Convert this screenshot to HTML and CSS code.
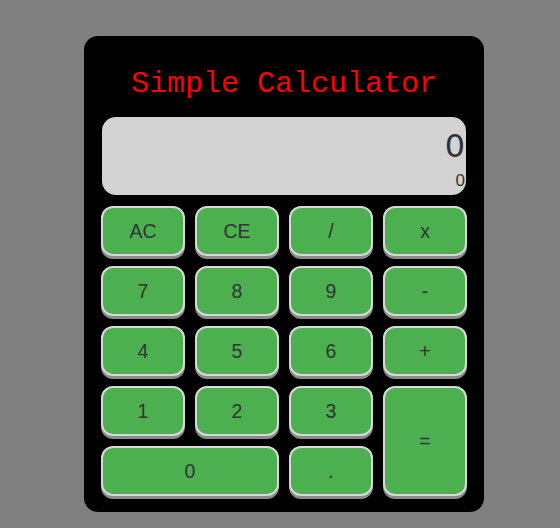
FILE: index.html
```html
<!DOCTYPE html>
<html>
<head>
<meta charset="utf-8">
<link rel="stylesheet" href="styles.css">
</head>
<body>
<div class="calc">
  <h1 class="title">Simple Calculator</h1>
  <div class="display">
    <div class="current">0</div>
    <div class="previous">0</div>
  </div>
  <div class="keys">
    <button class="key">AC</button>
    <button class="key">CE</button>
    <button class="key">/</button>
    <button class="key">x</button>
    <button class="key">7</button>
    <button class="key">8</button>
    <button class="key">9</button>
    <button class="key">-</button>
    <button class="key">4</button>
    <button class="key">5</button>
    <button class="key">6</button>
    <button class="key">+</button>
    <button class="key">1</button>
    <button class="key">2</button>
    <button class="key">3</button>
    <button class="key equals">=</button>
    <button class="key zero">0</button>
    <button class="key">.</button>
  </div>
</div>
</body>
</html>
```

FILE: styles.css
```css
html, body {
  margin: 0;
  padding: 0;
}
body {
  background: #808080;
  width: 560px;
  height: 528px;
  box-sizing: border-box;
  padding-left: 8px;
  display: flex;
  justify-content: center;
  align-items: flex-start;
  font-family: "Liberation Sans", Arial, sans-serif;
}
.calc {
  margin-top: 36px;
  width: 400px;
  box-sizing: border-box;
  background: #000;
  border-radius: 14px;
  padding: 30px 17px 16px;
}
.title {
  margin: 0 0 15px;
  font-family: "Courier New", Courier, "Nimbus Mono PS", "FreeMono", "Liberation Mono", monospace;
  font-weight: normal;
  font-size: 30px;
  line-height: 36px;
  color: #ff0000;
  text-align: center;
}
.display {
  margin: 0 1px 11px;
  height: 78px;
  box-sizing: border-box;
  background: #d3d3d3;
  border-radius: 14px;
  display: flex;
  flex-direction: column;
  align-items: flex-end;
  padding-top: 13px;
  color: #333;
}
.current {
  font-family: "DejaVu Sans", sans-serif;
  font-size: 32px;
  line-height: 32px;
  margin-right: 1px;
}
.previous {
  font-size: 17px;
  line-height: 17px;
  margin-top: 10px;
  margin-right: 1px;
}
.keys {
  display: grid;
  grid-template-columns: repeat(4, 84px);
  grid-auto-rows: 50px;
  gap: 10px;
}
.key {
  background: #4caf50;
  border: 2px solid #d8d8d8;
  border-radius: 12px;
  box-shadow: 0 3px 0 #8a8a8a;
  color: #333;
  font-family: "Liberation Sans", Arial, sans-serif;
  font-size: 19.5px;
  padding: 0;
  margin: 0;
}
.equals {
  grid-column: 4;
  grid-row: 4 / span 2;
}
.zero {
  grid-column: 1 / span 2;
}
```
